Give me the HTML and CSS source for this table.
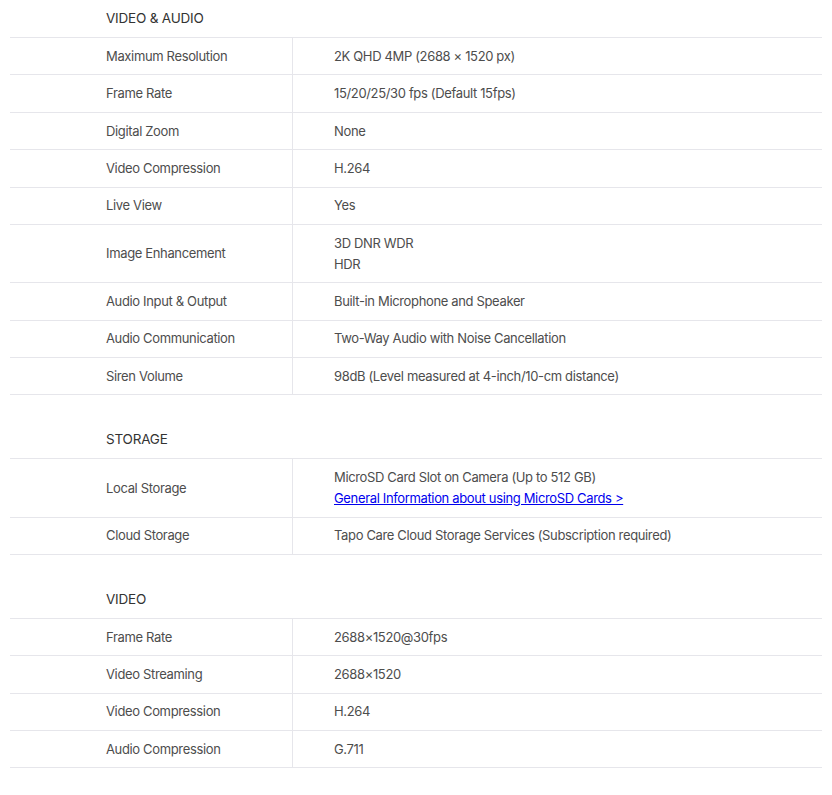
FILE: index.html
```html
<!DOCTYPE html>
<html>
<head>
<meta charset="utf-8">
<link rel="stylesheet" href="styles.css">
</head>
<body>
<div class="specs">
  <section class="group">
    <h3 class="group-title">VIDEO &amp; AUDIO</h3>
    <table class="spec-table">
      <tr><th>Maximum Resolution</th><td>2K QHD 4MP (2688 × 1520 px)</td></tr>
      <tr><th>Frame Rate</th><td>15/20/25/30 fps (Default 15fps)</td></tr>
      <tr><th>Digital Zoom</th><td>None</td></tr>
      <tr><th>Video Compression</th><td>H.264</td></tr>
      <tr><th>Live View</th><td>Yes</td></tr>
      <tr><th>Image Enhancement</th><td>3D DNR WDR<br>HDR</td></tr>
      <tr><th>Audio Input &amp; Output</th><td>Built-in Microphone and Speaker</td></tr>
      <tr><th>Audio Communication</th><td>Two-Way Audio with Noise Cancellation</td></tr>
      <tr><th>Siren Volume</th><td>98dB (Level measured at 4-inch/10-cm distance)</td></tr>
    </table>
  </section>
  <section class="group">
    <h3 class="group-title">STORAGE</h3>
    <table class="spec-table">
      <tr><th>Local Storage</th><td>MicroSD Card Slot on Camera (Up to 512 GB)<br><a href="#" class="link">General Information about using MicroSD Cards &gt;</a></td></tr>
      <tr><th>Cloud Storage</th><td>Tapo Care Cloud Storage Services (Subscription required)</td></tr>
    </table>
  </section>
  <section class="group">
    <h3 class="group-title">VIDEO</h3>
    <table class="spec-table">
      <tr><th>Frame Rate</th><td>2688×1520@30fps</td></tr>
      <tr><th>Video Streaming</th><td>2688×1520</td></tr>
      <tr><th>Video Compression</th><td>H.264</td></tr>
      <tr><th>Audio Compression</th><td>G.711</td></tr>
    </table>
  </section>
</div>
</body>
</html>
```
FILE: styles.css
```css
html, body {
  margin: 0;
  padding: 0;
  background: #fff;
}
body {
  font-family: Inter, "Liberation Sans", sans-serif;
  font-size: 13px;
  letter-spacing: -0.35px;
  color: #4d4d4d;
}
.specs {
  padding: 0 10px;
}
.group + .group {
  margin-top: 26px;
}
.group-title {
  margin: 0;
  height: 38px;
  box-sizing: border-box;
  padding: 9px 0 0 96px;
  font-size: 13.5px;
  font-weight: 400;
  letter-spacing: -0.2px;
  line-height: 18px;
  color: #333;
  border-bottom: 1px solid #e6e6eb;
}
.spec-table {
  width: 100%;
  border-collapse: collapse;
}
.spec-table th,
.spec-table td {
  text-align: left;
  font-weight: 400;
  vertical-align: middle;
  line-height: 20.8px;
  padding: 7.8px 0;
  border-bottom: 1px solid #e6e6eb;
}
.spec-table th {
  width: 186px;
  padding-left: 96px;
  border-right: 1px solid #e6e6eb;
}
.spec-table td {
  padding-left: 41px;
}
.link {
  color: #0000ee;
  text-decoration: underline;
}
```
